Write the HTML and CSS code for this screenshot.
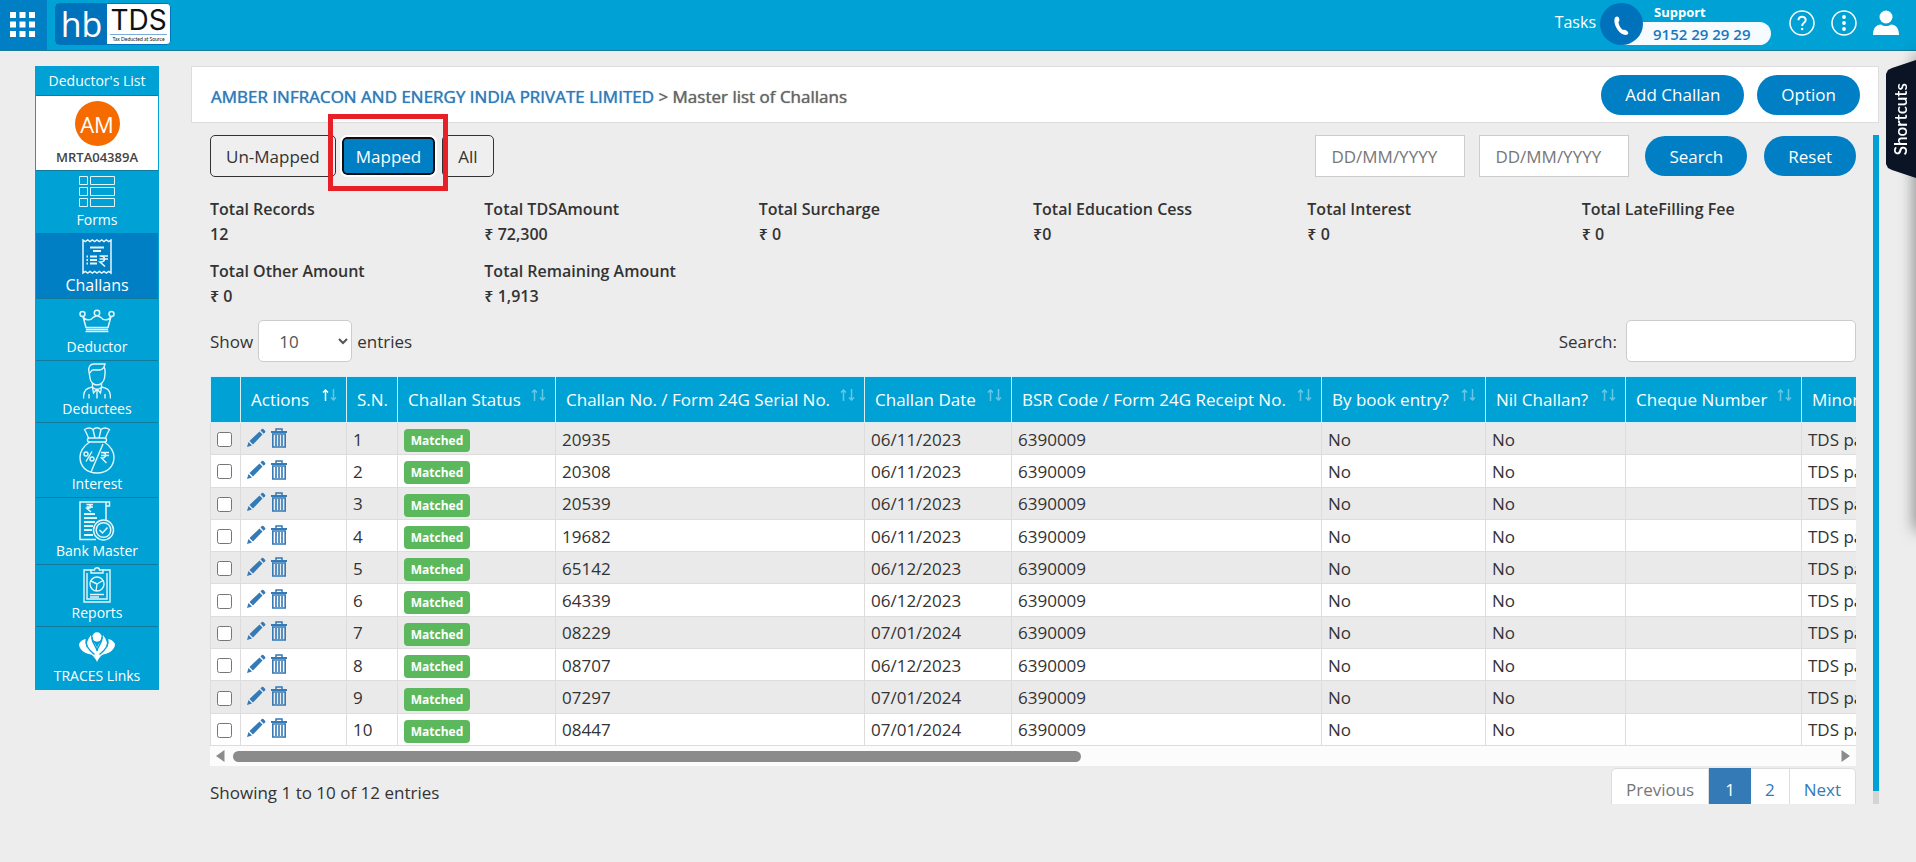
FILE: index.html
```html
<!DOCTYPE html>
<html lang="en">
<head>
  <meta charset="UTF-8" />
  <title>Master list of Challans</title>
  <link rel="stylesheet" href="styles.css">
</head>
<body>
  <header class="topbar">
    <button class="apps" type="button" aria-label="Apps">
      <svg width="25" height="25" viewBox="0 0 25 25" fill="#fff"><path d="M0 0h6v6H0zM9.500 0h6v6h-6zM19 0h6v6h-6zM0 9.500h6v6H0zM9.500 9.500h6v6h-6zM19 9.500h6v6h-6zM0 19h6v6H0zM9.500 19h6v6h-6zM19 19h6v6h-6z"/></svg>
    </button>
    <a class="logo" href="#">
      <span class="logo-hb">hb</span>
      <span class="logo-tds"><b>TDS</b><small>Tax Deducted at Source</small></span>
    </a>
    <a class="tasks" href="#">Tasks</a>
    <div class="support">
      <span class="phone">
        <svg width="15" height="20" viewBox="0 0 15 20"><path d="M1 1.500C3-.5 5 .5 5.300 3c.2 1.600 0 2.500-.9 3.200C5 9.500 6.500 12 9 14c1-.6 2.500-.3 4 .9 1.800 1.400 1.700 3-.2 3.900C6.500 20.500-2 8.500 1 1.500z" fill="#fff"/></svg>
      </span>
      <span class="support-title">Support</span>
      <span class="support-no">9152 29 29 29</span>
    </div>
    <a class="top-icon" href="#" aria-label="Help">
      <svg width="26" height="26" viewBox="0 0 26 26" fill="none" stroke="#fff" stroke-width="1.500"><circle cx="13" cy="13" r="12"/><path d="M9.500 10.200c0-4.700 7.200-4.500 7.200-.3 0 2.900-3.600 2.800-3.600 6" stroke-width="2"/><circle cx="13.100" cy="19" r="1.300" fill="#fff" stroke="none"/></svg>
    </a>
    <a class="top-icon" href="#" aria-label="More">
      <svg width="26" height="26" viewBox="0 0 26 26"><circle cx="13" cy="13" r="12" fill="none" stroke="#fff" stroke-width="1.500"/><g fill="#fff"><circle cx="13" cy="7" r="1.900"/><circle cx="13" cy="13" r="1.900"/><circle cx="13" cy="19" r="1.900"/></g></svg>
    </a>
    <a class="top-icon" href="#" aria-label="Account">
      <svg width="26" height="26" viewBox="0 0 26 26" fill="#fff"><circle cx="13" cy="7" r="6.500"/><path d="M0 25c0-7 3-10 8-10.500 3 2 7 2 10 0 5 .5 8 3.500 8 10.500z"/></svg>
    </a>
  </header>

  <div class="page">
    <nav class="sidebar">
      <a class="side-head" href="#">Deductor's List</a>
      <div class="side-user">
        <span class="avatar">AM</span>
        <strong>MRTA04389A</strong>
      </div>
      <a class="side-item h62" href="#">
        <svg width="36" height="34" viewBox="0 0 36 34"><path d="M.5.5h8v8h-8zM11.500.5h24v8h-24zM.5 11.500h8v8h-8zM11.500 11.500h24v8h-24zM.5 22.500h8v8h-8zM11.500 22.500h24v8h-24z"/></svg>
        Forms
      </a>
      <a class="side-item h65 active" href="#">
        <svg width="30" height="36" viewBox="0 0 30 36"><path d="M1 1l2.300 1.600L5.700 1 8 2.600 10.300 1l2.400 1.600L15 1l2.300 1.600L19.700 1 22 2.600 24.300 1l2.400 1.600L29 1v33l-2.300-1.600L24.300 34 22 32.400 19.700 34l-2.400-1.600L15 34l-2.300-1.600L10.300 34 8 32.400 5.700 34l-2.400-1.600L1 34z" stroke-width="1.500"/><path d="M8 8.500h14M11 12h8M8 17.500h7M8 21h7M8 24.500h7" stroke-width="1.800"/><path d="M4.500 17.500H6M4.500 21H6M4.500 24.500H6" stroke-width="1.800"/><path d="M17.500 17H26M17.500 20H26M18 17c6 0 6 6 0 6l5 4.500" stroke-width="1.600"/></svg>
        Challans
      </a>
      <a class="side-item h61" href="#">
        <svg width="36" height="28" viewBox="0 0 36 28"><g stroke-width="1.500"><circle cx="18" cy="4" r="2.700"/><circle cx="3.500" cy="5" r="2.500"/><circle cx="32.500" cy="5" r="2.500"/><path d="M4 7.500l3 11h22l3-11c-1.500 4-8 4.500-10 1L18.500 6.700h-1L14 8.500c-2 3.500-8.500 3-10-1zM6.500 22.500h23M7 20.500h22"/></g></svg>
        Deductor
      </a>
      <a class="side-item h61" href="#">
        <svg width="28" height="36" viewBox="0 0 28 36"><g stroke-width="1.400"><path d="M6 9c-1-5 1-8 5-8h11l-1 3c1.500 2 1 8 .5 11-.7 4-4 7-7.500 7s-6.500-3-7-7z"/><path d="M7 10c1-1 1-3 3-3h6c3 0 4-1 5-3M9.500 20v4c-5 1-9 2-9 11.500M18.500 20v4c5 1 9 2 9 11.500M9.500 24l1 6 3.500-4 3.500 4 1-6M14 26v9.500M6 31v4.500M22 31v4.500M9 24l5 3 5-3"/></g></svg>
        Deductees
      </a>
      <a class="side-item h74" href="#">
        <svg width="36" height="47" viewBox="0 0 36 47"><g stroke-width="1.400"><path d="M9.500 11C8 7 7 5 5.500 2.500 9 .3 12 .8 14 2.500 16.500.3 19.500.3 22 2.500c2-1.700 5-2.200 8.500 0C29 5 28 7 26.500 11M14 2.500L16 11M22 2.500L20 11"/><rect x="8.500" y="11" width="19" height="4" rx="2"/><path d="M10.500 15C5 19 1 24 1 30c0 10 7 16 17 16s17-6 17-16c0-6-4-11-9.500-15M24 17L12 45"/><circle cx="7" cy="27" r="2"/><circle cx="13" cy="32" r="2"/><path d="M13 24.500L7 34.500M22 25.500h8M22 28.500h8M22.500 25.500c5.500 0 5.500 5.500 0 5.500l5 5"/></g></svg>
        Interest
      </a>
      <a class="side-item h66" href="#">
        <svg width="36" height="40" viewBox="0 0 36 40"><g stroke-width="1.500"><path d="M27 19V1H1v37.500h16M27 1h3.500v4H27M7.500 3.500H14M7.500 6H14M8 3.500c5 0 5 4 0 4l4 3.500"/><path d="M5 13h11M5 17h13M5 21h11M5 25h9M5 29h8M5 34h9" stroke-width="2.200"/><circle cx="24.500" cy="29" r="10"/><circle cx="24.500" cy="29" r="7.300"/><path d="M20.500 29l3 3 5-5.500"/></g></svg>
        Bank Master
      </a>
      <a class="side-item h61" href="#">
        <svg width="28" height="36" viewBox="0 0 28 36"><g stroke-width="1.400"><path d="M8 3H1v32h26V3h-7M4 6v26h20V6"/><path d="M8 6V3h3.500c0-3 5-3 5 0H20v3z"/><circle cx="14" cy="17" r="7"/><path d="M14 17L8 14M14 17l6-3.500M14 17l-1 7M7 27.500h14M7 30h9"/></g></svg>
        Reports
      </a>
      <a class="side-item h62" href="#">
        <svg width="36" height="34" viewBox="0 0 36 34"><g fill="#fff" stroke="none"><circle cx="18" cy="5" r="4.700"/><path d="M18 30c-2-6-8-8-10-14-.9-4 .5-9 4-13 0 7 5.500 8 6 14 .5-6 6-7 6-14 3.500 4 4.900 9 4 13-2 6-8 8-10 14z"/><path d="M0 12C1.500 9 4 7.500 7 7c-1.500 6 1 11 8 16C6 22 0 18 0 12zM36 12c-1.500-3-4-4.500-7-5 1.500 6-1 11-8 16 9-1 15-5 15-11z"/></g><path d="M7.500 7c-1.500 6 2 11 8 15.500M28.500 7c1.500 6-2 11-8 15.500M13 5c-.5 6 4.500 9 5 14 .5-5 5.500-8 5-14" stroke="#00a1d4" stroke-width="1.400"/></svg>
        TRACES Links
      </a>
    </nav>

    <main class="main">
      <div class="title-bar">
        <h1><a href="#">AMBER INFRACON AND ENERGY INDIA PRIVATE LIMITED</a> &gt; Master list of Challans</h1>
        <button class="pill" type="button">Add Challan</button>
        <button class="pill" type="button">Option</button>
      </div>

      <div class="scroller">
        <div class="content">
          <div class="filters">
            <button class="tab" type="button">Un-Mapped</button>
            <span class="tab-mark"><button class="tab selected" type="button">Mapped</button></span>
            <button class="tab" type="button">All</button>
            <input class="date first" type="text" placeholder="DD/MM/YYYY" aria-label="From date">
            <input class="date" type="text" placeholder="DD/MM/YYYY" aria-label="To date">
            <button class="pill" type="button">Search</button>
            <button class="pill" type="button">Reset</button>
          </div>

          <dl class="totals">
            <div><dt>Total Records</dt><dd>12</dd></div>
            <div><dt>Total TDSAmount</dt><dd>₹ 72,300</dd></div>
            <div><dt>Total Surcharge</dt><dd>₹ 0</dd></div>
            <div><dt>Total Education Cess</dt><dd>₹0</dd></div>
            <div><dt>Total Interest</dt><dd>₹ 0</dd></div>
            <div><dt>Total LateFilling Fee</dt><dd>₹ 0</dd></div>
            <div><dt>Total Other Amount</dt><dd>₹ 0</dd></div>
            <div><dt>Total Remaining Amount</dt><dd>₹ 1,913</dd></div>
          </dl>

          <div class="table-tools">
            <label class="length">Show <select><option>10</option><option>25</option><option>50</option></select> entries</label>
            <label class="search">Search: <input type="search"></label>
          </div>

          <div class="table-wrap">
            <table>
              <colgroup>
                <col class="c-check"><col class="c-actions"><col class="c-sn"><col class="c-status"><col class="c-no"><col class="c-date"><col class="c-bsr"><col class="c-book"><col class="c-nil"><col class="c-cheque"><col class="c-minor">
              </colgroup>
              <thead>
                <tr>
                  <th></th>
                  <th class="sort asc">Actions</th>
                  <th>S.N.</th>
                  <th class="sort">Challan Status</th>
                  <th class="sort">Challan No. / Form 24G Serial No.</th>
                  <th class="sort">Challan Date</th>
                  <th class="sort">BSR Code / Form 24G Receipt No.</th>
                  <th class="sort">By book entry?</th>
                  <th class="sort">Nil Challan?</th>
                  <th class="sort">Cheque Number</th>
                  <th class="sort">Minor Head</th>
                </tr>
              </thead>
              <tbody id="rows"></tbody>
            </table>
          </div>
          <div class="hscroll">
            <svg width="9" height="12" viewBox="0 0 9 12"><path d="M8.500 0v12L0 6z" fill="#8b8b8b"/></svg>
            <div class="track"><div class="thumb"></div></div>
            <svg width="9" height="12" viewBox="0 0 9 12"><path d="M.5 0v12L9 6z" fill="#8b8b8b"/></svg>
          </div>

          <div class="table-foot">
            <span>Showing 1 to 10 of 12 entries</span>
            <div class="pages">
              <a class="disabled" href="#">Previous</a>
              <a class="current" href="#">1</a>
              <a href="#">2</a>
              <a href="#">Next</a>
            </div>
          </div>
        </div>
        <div class="vscroll"></div>
      </div>
    </main>
  </div>

  <div class="drawer-edge"></div>
  <button class="shortcuts" type="button"><span>Shortcuts</span></button>

  <script src="script.js"></script>
</body>
</html>
```
FILE: styles.css
```css
* { box-sizing: border-box; }
body { margin: 0; min-height: 100vh; overflow: hidden; background: #ededed; color: #333; font-family: "Segoe UI", "Open Sans", "Noto Sans", sans-serif; font-size: 17px; line-height: 25px; }
a { color: #337ab7; text-decoration: none; }
button, input, select { font: inherit; color: inherit; }
button { cursor: pointer; }
svg { display: block; flex: none; }

/* Top bar */
.topbar { display: flex; align-items: center; height: 51px; padding-right: 17px; background: #00a1d4; border-bottom: 1px solid #1b7a9c; color: #fff; }
.apps { display: flex; align-items: center; justify-content: center; width: 47px; height: 50px; padding: 0 2px 2px 0; border: 0; background: #007fc4; }
.logo { display: flex; width: 116px; height: 42px; margin: 0 auto 2px 8px; background: #fff; border: 1px solid #0074bd; border-radius: 4px; }
.logo-hb { width: 51px; background: #0072bc; color: #fff; font: 34px/40px "Open Sans", sans-serif; text-align: center; }
.logo-tds { display: flex; flex-direction: column; align-items: center; flex: 1; padding-top: 2px; color: #111; }
.logo-tds b { font: 28px/28px Inter, sans-serif; border-bottom: 1px solid #79aedb; }
.logo-tds small { font: 5px/9px Lato, sans-serif; }
.tasks { color: #fff; font-size: 16px; line-height: 22px; margin: 0 4px 6px 0; }
.support { position: relative; display: flex; flex-direction: column; width: 171px; height: 42px; margin: 0 18px 2px 0; }
.support-title { padding-left: 54px; font-size: 13px; line-height: 19px; font-weight: 700; }
.support-no { margin-left: 20px; padding-left: 33px; height: 23px; border-radius: 0 12px 12px 0; background: #f6fbff; color: #1878c0; font-weight: 600; font-size: 15px; line-height: 24px; white-space: nowrap; }
.phone { position: absolute; left: 0; top: 0; display: flex; align-items: center; justify-content: center; width: 43px; height: 42px; padding-top: 4px; border-radius: 50%; background: #0072bc; }
.top-icon { margin: 0 0 4px 16px; }
.support + .top-icon { margin-left: 0; }

.page { display: flex; align-items: flex-start; gap: 32px; padding: 15px 37px 0 35px; }

/* Sidebar */
.sidebar { flex: none; width: 124px; background: #00a1d4; border: 1px solid #00a1d4; font-size: 14px; }
.side-head { display: block; height: 29px; line-height: 28px; color: #fff; text-align: center; border-bottom: 1px solid #147a9c; }
.side-user { display: flex; flex-direction: column; align-items: center; height: 74px; padding-top: 5px; background: #fff; }
.side-user strong { font-size: 13px; font-weight: 600; line-height: 22px; color: #444; }
.avatar { width: 45px; height: 45px; border-radius: 50%; background: #f56b00; color: #fff; font-size: 22px; line-height: 46px; text-align: center; }
.side-item { display: flex; flex-direction: column; align-items: center; justify-content: flex-end; color: #fff; line-height: 20px; border-top: 1px solid #147a9c; padding-bottom: 3px; }
.side-item svg { fill: none; stroke: #e3f7fd; }
.side-item.active { background: #007fc4; font-size: 16px; }
.h61 { height: 62px; }
.h62 { height: 63px; }
.h65 { height: 65px; }
.h66 { height: 67px; }
.h74 { height: 75px; }

/* Title bar */
.main { flex: 1; min-width: 0; }
.title-bar { display: flex; align-items: center; gap: 13px; height: 57px; padding: 0 18px 0 19px; background: #fff; border: 1px solid #ddd; }
.title-bar h1 { flex: 1; margin: 0; padding-top: 4px; color: #666; font-size: 17px; font-weight: 400; text-shadow: 0 0 1px currentColor; }
.pill { height: 40px; padding: 0 24px; border: 0; border-radius: 20px; background: #007fc4; color: #fff; }

/* Content */
.scroller { display: flex; gap: 17px; height: 669px; margin-top: 12px; padding-left: 19px; }
.content { display: flex; flex-direction: column; flex: 1; min-width: 0; }
.vscroll { width: 6px; background: linear-gradient(#00a1d4, #00a1d4) no-repeat #d4d4d4; background-size: 100% 656px; }

.filters { display: flex; align-items: center; height: 42px; }
.tab { height: 42px; padding: 0 15px; border: 1px solid #333; border-radius: 5px; background: #efefef; }
.tab-mark { position: relative; margin: 0 7px 0 6px; }
.tab-mark::after { content: ""; position: absolute; inset: -23px -13px -16px -14px; border: 5px solid #e71f26; pointer-events: none; }
.tab.selected { display: block; height: 38px; padding: 0 12px; border: 2px solid #101010; outline: 2px solid #fff; background: #007fc4; color: #fff; }
.date { width: 150px; height: 42px; padding: 0 15px; border: 1px solid #ccc; background: #fff; margin-right: 14px; }
.date.first { margin-left: auto; }
.date::placeholder { color: #777; }
.filters .pill + .pill { margin-left: 17px; }
.filters .date + .pill { margin-left: 2px; }

.totals { display: grid; grid-template-columns: repeat(6, 1fr); row-gap: 12px; margin: 20px 0 11px; font-size: 16px; font-weight: 600; }
.totals dd { margin: 0; }

.table-tools { display: flex; justify-content: space-between; height: 42px; line-height: 44px; }
.table-tools label { display: flex; gap: 5px; }
.table-tools .search { gap: 9px; }
.table-tools select { width: 94px; height: 42px; padding: 0 16px; border: 1px solid #ccc; border-radius: 5px; background: #fff; color: #555; }
.table-tools input { width: 230px; height: 42px; padding: 0 12px; border: 1px solid #ccc; border-radius: 5px; background: #fff; }

/* Table */
.table-wrap { flex: none; margin-top: 14px; overflow: hidden; }
table { table-layout: fixed; width: 1790px; height: 370px; border-collapse: collapse; background: #fff; }
.c-check { width: 30px; }
.c-actions { width: 106px; }
.c-sn { width: 51px; }
.c-status { width: 158px; }
.c-no { width: 309px; }
.c-date { width: 147px; }
.c-bsr { width: 310px; }
.c-book { width: 164px; }
.c-nil { width: 140px; }
.c-cheque { width: 176px; }
th { position: relative; height: 46px; padding: 0 0 0 10px; background: #00a1d4; border: 1px solid #d5f0f9; color: #fff; font-weight: 400; text-align: left; white-space: nowrap; }
.sort::after { content: ""; position: absolute; right: 9px; top: 12px; width: 15px; height: 12px; background: url("data:image/svg+xml,%3Csvg xmlns='http://www.w3.org/2000/svg' width='15' height='12' fill='none' stroke='%2366c7e5' stroke-width='1.500'%3E%3Cpath d='M3.500 12V1M1 3.500L3.500 1 6 3.500M11.500 0v11M9 8.500l2.500 2.500L14 8.500'/%3E%3C/svg%3E"); }
.sort.asc::after { background-image: url("data:image/svg+xml,%3Csvg xmlns='http://www.w3.org/2000/svg' width='15' height='12' fill='none' stroke-width='1.500'%3E%3Cpath d='M3.500 12V1M1 3.500L3.500 1 6 3.500' stroke='white'/%3E%3Cpath d='M11.500 0v11M9 8.500l2.500 2.500L14 8.500' stroke='%2366c7e5'/%3E%3C/svg%3E"); }
td { padding: 2px 0 0 6px; border: 1px solid #ddd; line-height: 24px; white-space: nowrap; }
tbody tr:nth-child(odd) { background: #eaeaea; }
td input { display: block; width: 15px; height: 15px; margin: 0; }
.row-actions { display: flex; gap: 5px; padding-bottom: 4px; }
.label { display: block; width: 66px; height: 23px; margin-top: 2px; border-radius: 4px; background: #5cb85c; color: #fff; font-size: 12px; font-weight: 700; line-height: 24px; text-align: center; }

.hscroll { flex: none; display: flex; align-items: center; gap: 8px; height: 20px; padding: 0 6px; background: #fcfcfc; }
.track { flex: 1; }
.thumb { width: 53%; height: 11px; border-radius: 6px; background: #8b8b8b; }

.table-foot { flex: 1; min-height: 0; display: flex; align-items: flex-start; justify-content: space-between; padding-top: 2px; line-height: 49px; overflow: hidden; }
.pages { display: flex; height: 42px; line-height: 41px; background: #fff; border: 1px solid #ddd; border-radius: 5px; }
.pages a { padding: 0 14px; border-right: 1px solid #ddd; }
.pages a:last-child { border: 0; }
.pages .disabled { color: #777; }
.pages .current { margin: -1px 0; padding: 1px 16px; background: #337ab7; color: #fff; border: 0; }

/* Shortcuts drawer, closed against the right edge */
.drawer-edge { position: fixed; right: -10px; top: 56px; width: 10px; height: 474px; box-shadow: 0 0 16px rgba(0, 0, 0, 0.6); }
.shortcuts { position: fixed; right: 0; top: 60px; display: flex; align-items: center; justify-content: center; width: 30px; height: 118px; padding: 0; border: 0; background: #0a1424; clip-path: polygon(0 14px, 2px 10px, 6px 8px, 100% 0, 100% 100%, 6px 110px, 2px 108px, 0 104px); color: #fff; }
.shortcuts span { writing-mode: vertical-rl; transform: rotate(180deg); font: 600 17px/20px Lato, sans-serif; }
```
FILE: script.js
```js
const challans = [
  ['20935', '06/11/2023'],
  ['20308', '06/11/2023'],
  ['20539', '06/11/2023'],
  ['19682', '06/11/2023'],
  ['65142', '06/12/2023'],
  ['64339', '06/12/2023'],
  ['08229', '07/01/2024'],
  ['08707', '06/12/2023'],
  ['07297', '07/01/2024'],
  ['08447', '07/01/2024']
];

const editIcon = '<svg width="19" height="19" viewBox="0 0 19 19" fill="#337ab7"><path d="M0 19l1.500-5L5 17.500zM2.500 13L12.500 3.500l3 3L6 16.500zM13.500 2.500l1.500-1.800c1.300-.3 3.500 2 3.500 3.300l-1.800 1.700z"/></svg>';
const trashIcon = '<svg width="16" height="20" viewBox="0 0 16 20" fill="none" stroke="#337ab7"><path d="M0 4h16" stroke-width="2"/><path d="M5 3V1h6v2" stroke-width="1.500"/><path d="M1.800 6v13h12.400V6zM5 7v11M8 7v11M11 7v11" stroke-width="1.600"/></svg>';

document.getElementById('rows').innerHTML = challans.map(([no, date], i) => `
  <tr>
    <td><input type="checkbox" aria-label="Select challan ${no}"></td>
    <td><div class="row-actions"><a href="#" aria-label="Edit">${editIcon}</a><a href="#" aria-label="Delete">${trashIcon}</a></div></td>
    <td>${i + 1}</td>
    <td><span class="label">Matched</span></td>
    <td>${no}</td>
    <td>${date}</td>
    <td>6390009</td>
    <td>No</td>
    <td>No</td>
    <td></td>
    <td>TDS payable by taxpayer</td>
  </tr>`).join('');
```
